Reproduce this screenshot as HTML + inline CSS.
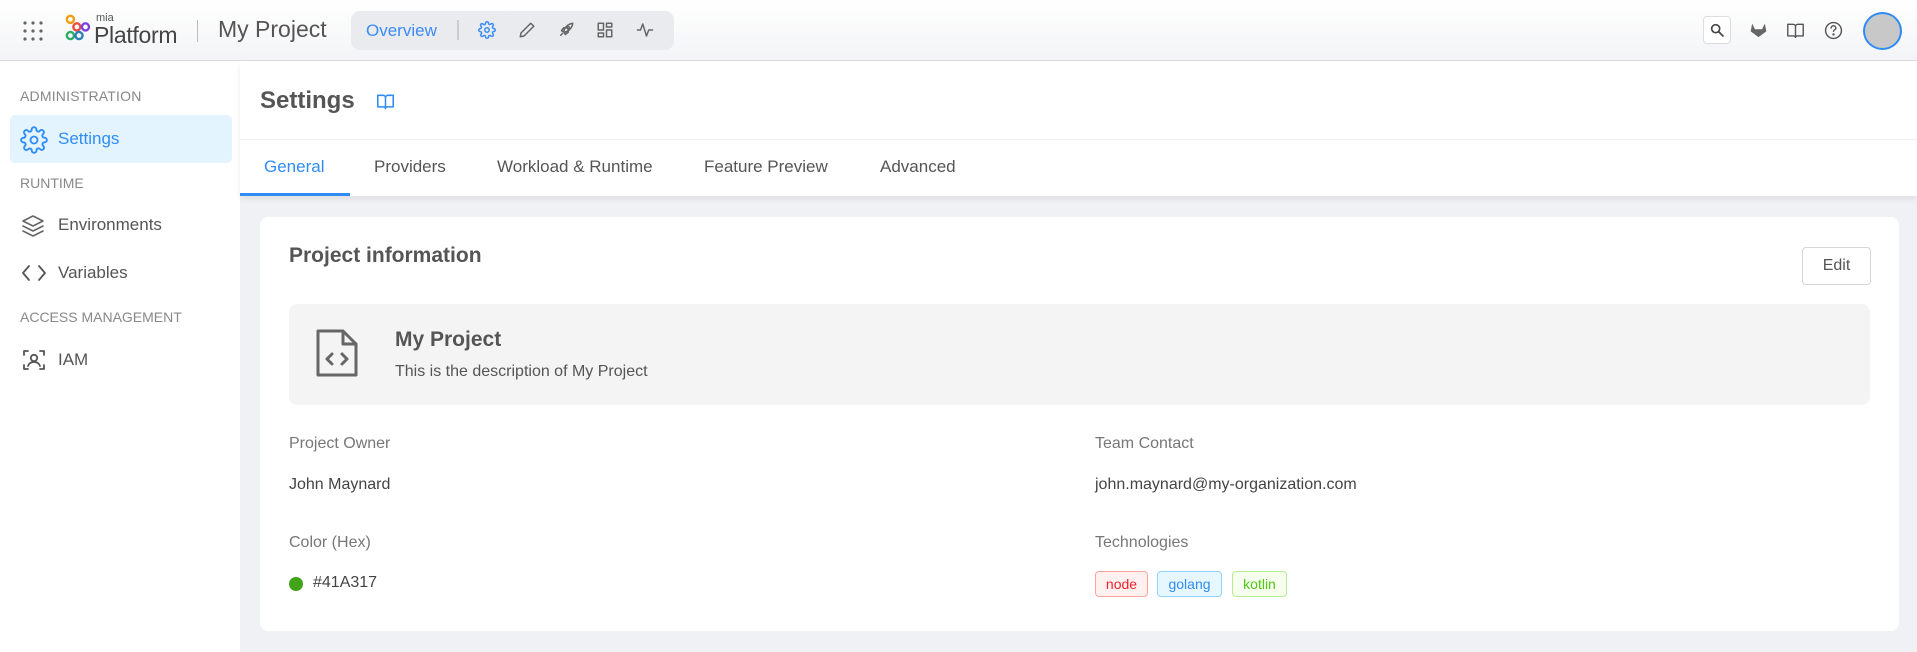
<!DOCTYPE html>
<html><head><meta charset="utf-8"><style>
*{box-sizing:border-box;margin:0;padding:0}
body{width:1917px;height:652px;overflow:hidden;background:#fff;font-family:"Liberation Sans",sans-serif;color:#555;position:relative}
.a{position:absolute;white-space:nowrap}
svg{position:absolute;fill:none;stroke-linecap:round;stroke-linejoin:round}
</style></head><body>
<div class="a" style="left:0;top:0;width:1917px;height:61px;background:linear-gradient(#fff,#f3f4f6);border-bottom:1px solid #dcdcdc"></div>
<svg style="left:22px;top:20px" width="22" height="22" viewBox="0 0 22 22"><g fill="#666" stroke="none"><circle cx="3" cy="3" r="1.6"/><circle cx="11" cy="3" r="1.6"/><circle cx="19" cy="3" r="1.6"/><circle cx="3" cy="11" r="1.6"/><circle cx="11" cy="11" r="1.6"/><circle cx="19" cy="11" r="1.6"/><circle cx="3" cy="19" r="1.6"/><circle cx="11" cy="19" r="1.6"/><circle cx="19" cy="19" r="1.6"/></g></svg>
<svg style="left:65px;top:14px" width="28" height="28" viewBox="0 0 26 26" stroke-width="2.2"><circle cx="5" cy="5" r="3.3" stroke="#f39c12"/><circle cx="11" cy="12" r="3.3" stroke="#e74c3c"/><circle cx="19" cy="12" r="3.3" stroke="#7b3fe4"/><circle cx="5" cy="20" r="3.3" stroke="#27ae60"/><circle cx="13" cy="20" r="3.3" stroke="#2980b9"/></svg>
<div class="a" style="left:96px;top:12px;font-size:11px;color:#555">mia</div>
<div class="a" style="left:94px;top:22px;font-size:23px;color:#444;letter-spacing:-0.3px">Platform</div>
<div class="a" style="left:197px;top:20px;width:1px;height:22px;background:#bbb"></div>
<div class="a" style="left:218px;top:16px;font-size:23px;color:#555">My Project</div>
<div class="a" style="left:351px;top:11px;width:323px;height:39px;background:#eaebee;border-radius:9px"></div>
<div class="a" style="left:366px;top:21px;font-size:17px;color:#3b8cf5">Overview</div>
<div class="a" style="left:457px;top:20px;width:2px;height:20px;background:#ccc"></div>
<svg style="left:478px;top:21px" width="18" height="18" viewBox="0 0 24 24" stroke="#3b8cf5" stroke-width="2"><circle cx="12" cy="12" r="3"/><path d="M19.4 15a1.7 1.7 0 0 0 .3 1.8l.1.1a2 2 0 1 1-2.8 2.8l-.1-.1a1.7 1.7 0 0 0-1.8-.3 1.7 1.7 0 0 0-1 1.5V21a2 2 0 0 1-4 0v-.1a1.7 1.7 0 0 0-1.1-1.5 1.7 1.7 0 0 0-1.8.3l-.1.1a2 2 0 1 1-2.8-2.8l.1-.1a1.7 1.7 0 0 0 .3-1.8 1.7 1.7 0 0 0-1.5-1H3a2 2 0 0 1 0-4h.1a1.7 1.7 0 0 0 1.5-1.1 1.7 1.7 0 0 0-.3-1.8l-.1-.1a2 2 0 1 1 2.8-2.8l.1.1a1.7 1.7 0 0 0 1.8.3H9a1.7 1.7 0 0 0 1-1.5V3a2 2 0 0 1 4 0v.1a1.7 1.7 0 0 0 1 1.5 1.7 1.7 0 0 0 1.8-.3l.1-.1a2 2 0 1 1 2.8 2.8l-.1.1a1.7 1.7 0 0 0-.3 1.8V9a1.7 1.7 0 0 0 1.5 1H21a2 2 0 0 1 0 4h-.1a1.7 1.7 0 0 0-1.5 1z"/></svg>
<svg style="left:518px;top:21px" width="18" height="18" viewBox="0 0 24 24" stroke="#666" stroke-width="2"><path d="M17 3l4 4L8 20l-5 1 1-5z"/></svg>
<svg style="left:557px;top:21px" width="18" height="18" viewBox="0 0 24 24" stroke="#666" stroke-width="2"><path d="M5 19l3-3M9 14c1-5 5-10 12-11-1 7-6 11-11 12zM9 14l-3-1 3-4h4M10 15l1 3 4-3v-4"/><circle cx="15" cy="9" r="1.5"/></svg>
<svg style="left:596px;top:21px" width="18" height="18" viewBox="0 0 24 24" stroke="#666" stroke-width="2"><rect x="3" y="3" width="7" height="9"/><rect x="14" y="3" width="7" height="5"/><rect x="14" y="12" width="7" height="9"/><rect x="3" y="16" width="7" height="5"/></svg>
<svg style="left:636px;top:21px" width="18" height="18" viewBox="0 0 24 24" stroke="#666" stroke-width="2"><path d="M2 12h4l3-8 5 16 3-8h5"/></svg>
<div class="a" style="left:1703px;top:16px;width:28px;height:28px;border:1px solid #ddd;border-radius:4px;background:#fff"></div>
<svg style="left:1709px;top:22px" width="16" height="16" viewBox="0 0 24 24" stroke="#444" stroke-width="2.5"><circle cx="10" cy="10" r="6"/><path d="M15 15l6 6"/></svg>
<svg style="left:1750px;top:22px" width="17" height="16" viewBox="0 0 24 22"><path d="M12 21L1 13l2-11 4 8h10l4-8 2 11z" fill="#666" stroke="none"/></svg>
<svg style="left:1786px;top:22px" width="19" height="17" viewBox="0 0 24 22" stroke="#555" stroke-width="1.8"><path d="M2 3h7a3 3 0 0 1 3 3v14a2 2 0 0 0-2-2H2zM22 3h-7a3 3 0 0 0-3 3v14a2 2 0 0 1 2-2h8z"/></svg>
<svg style="left:1824px;top:21px" width="19" height="19" viewBox="0 0 24 24" stroke="#555" stroke-width="1.8"><circle cx="12" cy="12" r="10"/><path d="M9 9a3 3 0 0 1 6 0c0 2-3 2-3 4"/><circle cx="12" cy="17" r=".6" fill="#555"/></svg>
<div class="a" style="left:1863px;top:12px;width:39px;height:38px;border-radius:50%;background:#c8c8c8;border:2px solid #2f8cf5"></div>
<div class="a" style="left:20px;top:88px;font-size:14px;color:#888;letter-spacing:0.2px">ADMINISTRATION</div>
<div class="a" style="left:10px;top:115px;width:222px;height:48px;background:#e4f4ff;border-radius:5px"></div>
<svg style="left:20px;top:126px" width="28" height="28" viewBox="0 0 24 24" stroke="#2f8cf5" stroke-width="1.6"><circle cx="12" cy="12" r="3"/><path d="M19.4 15a1.7 1.7 0 0 0 .3 1.8l.1.1a2 2 0 1 1-2.8 2.8l-.1-.1a1.7 1.7 0 0 0-1.8-.3 1.7 1.7 0 0 0-1 1.5V21a2 2 0 0 1-4 0v-.1a1.7 1.7 0 0 0-1.1-1.5 1.7 1.7 0 0 0-1.8.3l-.1.1a2 2 0 1 1-2.8-2.8l.1-.1a1.7 1.7 0 0 0 .3-1.8 1.7 1.7 0 0 0-1.5-1H3a2 2 0 0 1 0-4h.1a1.7 1.7 0 0 0 1.5-1.1 1.7 1.7 0 0 0-.3-1.8l-.1-.1a2 2 0 1 1 2.8-2.8l.1.1a1.7 1.7 0 0 0 1.8.3H9a1.7 1.7 0 0 0 1-1.5V3a2 2 0 0 1 4 0v.1a1.7 1.7 0 0 0 1 1.5 1.7 1.7 0 0 0 1.8-.3l.1-.1a2 2 0 1 1 2.8 2.8l-.1.1a1.7 1.7 0 0 0-.3 1.8V9a1.7 1.7 0 0 0 1.5 1H21a2 2 0 0 1 0 4h-.1a1.7 1.7 0 0 0-1.5 1z"/></svg>
<div class="a" style="left:58px;top:129px;font-size:17px;color:#2f8cf5">Settings</div>
<div class="a" style="left:20px;top:175px;font-size:14px;color:#888">RUNTIME</div>
<svg style="left:21px;top:214px" width="24" height="24" viewBox="0 0 24 24" stroke="#666" stroke-width="1.6"><path d="M12 2L2 7l10 5 10-5zM2 12l10 5 10-5M2 17l10 5 10-5"/></svg>
<div class="a" style="left:58px;top:215px;font-size:17px;color:#555">Environments</div>
<svg style="left:21px;top:263px" width="26" height="20" viewBox="0 0 26 20" stroke="#555" stroke-width="1.8"><path d="M8 3L2 10l6 7M18 3l6 7-6 7"/></svg>
<div class="a" style="left:58px;top:263px;font-size:17px;color:#555">Variables</div>
<div class="a" style="left:20px;top:309px;font-size:14px;color:#888">ACCESS MANAGEMENT</div>
<svg style="left:22px;top:348px" width="24" height="24" viewBox="0 0 24 24" stroke="#555" stroke-width="1.8"><path d="M2 7V3h4M18 3h4v4M22 17v4h-4M6 21H2v-4"/><circle cx="12" cy="10" r="3.2"/><path d="M6 18c1-3 3.5-4 6-4s5 1 6 4"/></svg>
<div class="a" style="left:58px;top:350px;font-size:17px;color:#555">IAM</div>
<div class="a" style="left:240px;top:62px;width:1677px;height:590px;background:#f0f1f4"></div>
<div class="a" style="left:240px;top:62px;width:1677px;height:134px;background:#fff;box-shadow:0 3px 6px rgba(0,0,0,0.08)"></div>
<div class="a" style="left:260px;top:87px;font-size:24px;font-weight:bold;color:#555">Settings</div>
<svg style="left:376px;top:93px" width="19" height="17" viewBox="0 0 24 22" stroke="#2f8cf5" stroke-width="2"><path d="M2 3h7a3 3 0 0 1 3 3v14a2 2 0 0 0-2-2H2zM22 3h-7a3 3 0 0 0-3 3v14a2 2 0 0 1 2-2h8z"/></svg>
<div class="a" style="left:240px;top:139px;width:1677px;height:1px;background:#eee"></div>
<div class="a" style="left:264px;top:157px;font-size:17px;color:#2f8cf5">General</div>
<div class="a" style="left:374px;top:157px;font-size:17px;color:#555">Providers</div>
<div class="a" style="left:497px;top:157px;font-size:17px;color:#555">Workload &amp; Runtime</div>
<div class="a" style="left:704px;top:157px;font-size:17px;color:#555">Feature Preview</div>
<div class="a" style="left:880px;top:157px;font-size:17px;color:#555">Advanced</div>
<div class="a" style="left:240px;top:193px;width:110px;height:3px;background:#2f8cf5"></div>
<div class="a" style="left:260px;top:217px;width:1639px;height:414px;background:#fff;border-radius:8px"></div>
<div class="a" style="left:289px;top:244px;font-size:21px;font-weight:bold;color:#555">Project information</div>
<div class="a" style="left:1802px;top:247px;width:69px;height:38px;border:1px solid #d6d6d6;border-radius:4px;font-size:16px;color:#555;text-align:center;line-height:36px">Edit</div>
<div class="a" style="left:289px;top:304px;width:1581px;height:101px;background:#f4f4f5;border-radius:8px"></div>
<svg style="left:315px;top:328px" width="44" height="50" viewBox="0 0 44 50" stroke="#666" stroke-width="3"><path d="M3 3h25l13 13v31H3zM28 3v13h13"/><path d="M17 26l-5 5 5 5M27 26l5 5-5 5"/></svg>
<div class="a" style="left:395px;top:328px;font-size:21px;font-weight:bold;color:#555">My Project</div>
<div class="a" style="left:395px;top:363px;font-size:16px;color:#555">This is the description of My Project</div>
<div class="a" style="left:289px;top:435px;font-size:16px;color:#777">Project Owner</div>
<div class="a" style="left:289px;top:476px;font-size:16px;color:#444">John Maynard</div>
<div class="a" style="left:289px;top:534px;font-size:16px;color:#777">Color (Hex)</div>
<div class="a" style="left:289px;top:577px;width:14px;height:14px;border-radius:50%;background:#41a317"></div>
<div class="a" style="left:313px;top:574px;font-size:16px;color:#444">#41A317</div>
<div class="a" style="left:1095px;top:435px;font-size:16px;color:#777">Team Contact</div>
<div class="a" style="left:1095px;top:476px;font-size:16px;color:#444">john.maynard@my-organization.com</div>
<div class="a" style="left:1095px;top:534px;font-size:16px;color:#777">Technologies</div>
<div class="a" style="left:1095px;top:571px;width:53px;height:26px;border:1px solid #ffa39e;background:#fff1f0;color:#f5222d;border-radius:4px;font-size:14px;text-align:center;line-height:24px">node</div>
<div class="a" style="left:1157px;top:571px;width:65px;height:26px;border:1px solid #91d5ff;background:#e6f7ff;color:#2f8cf5;border-radius:4px;font-size:14px;text-align:center;line-height:24px">golang</div>
<div class="a" style="left:1232px;top:571px;width:55px;height:26px;border:1px solid #b7eb8f;background:#f6ffed;color:#52c41a;border-radius:4px;font-size:14px;text-align:center;line-height:24px">kotlin</div>
</body></html>
